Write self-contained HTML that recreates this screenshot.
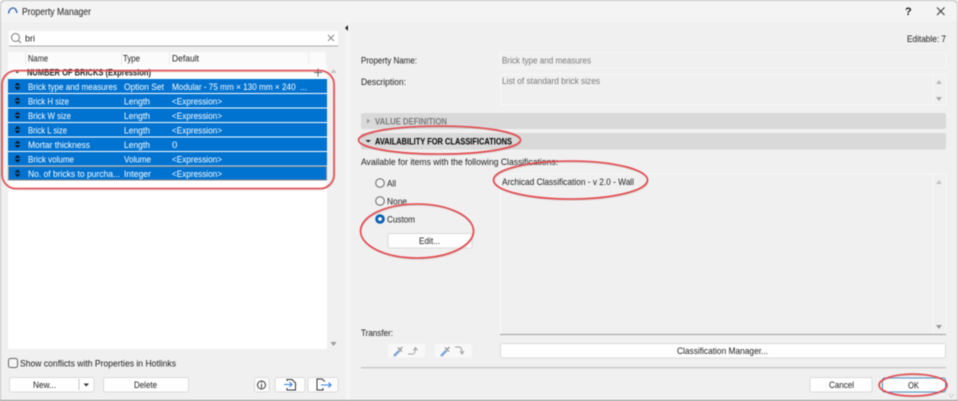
<!DOCTYPE html>
<html><head><meta charset="utf-8"><title>Property Manager</title>
<style>
html,body{margin:0;padding:0;width:958px;height:401px;overflow:hidden;background:#fff}
svg{display:block;filter:blur(.4px)}
text{font-family:"Liberation Sans",sans-serif;font-size:9.6px;fill:#1c1c1c}
.w text{fill:#fff}
.g{fill:#7a7a7a}
.b{font-weight:bold}
.btn{fill:#fefefe;stroke:#dadada;stroke-width:1}
.red{fill:none;stroke:#e5484c;stroke-width:1.6}
.sh{fill:none;stroke:#a88;stroke-opacity:.35;stroke-width:1.4}
</style></head><body>
<svg width="958" height="401" viewBox="0 0 958 401" xmlns="http://www.w3.org/2000/svg">
<rect width="958" height="401" fill="#ececec"/>
<path d="M1 401V6Q1 1 6 1H952Q957 1 957 6V401Z" fill="#f0f0f0"/>
<path d="M1 22V6Q1 1 6 1H952Q957 1 957 6V22Z" fill="#f4f4f4"/>
<path d="M.5 401V6Q.5 .5 6 .5H952Q957.5 .5 957.5 6V401" fill="none" stroke="#c0c0c0"/>
<rect x="0" y="400" width="958" height="1" fill="#8a8a8a"/>
<path d="M8.500 13.500Q9.500 8 13 8Q16 8 17 13" fill="none" stroke="#2a5fb0" stroke-width="1.300"/>
<text x="22" y="15" style="font-size:10.500px" textLength="69" lengthAdjust="spacingAndGlyphs">Property Manager</text>
<text x="905" y="15" style="font-size:11px" font-weight="bold">?</text>
<path d="M937 7.500L944.500 15M944.500 7.500L937 15" stroke="#333" stroke-width="1" fill="none"/>

<!-- search -->
<rect x="9" y="31" width="329" height="15" fill="#fff"/><rect x="9" y="45.500" width="329" height="1" fill="#aaa"/>
<circle cx="15.500" cy="37.500" r="4" fill="none" stroke="#777"/><path d="M18.500 40.500L21 43" stroke="#777"/>
<text x="25" y="41.500" textLength="10" lengthAdjust="spacingAndGlyphs">bri</text>
<path d="M328 35L334 41M334 35L328 41" stroke="#888"/>

<!-- list -->
<rect x="8" y="65" width="319" height="284" fill="#fff"/>
<rect x="8" y="52" width="318" height="13" fill="#fbfbfb"/>
<path d="M25.500 52V65M121.500 52V65M169.500 52V65M308.500 52V65" stroke="#ececec"/>
<text x="28" y="61.500" textLength="20" lengthAdjust="spacingAndGlyphs">Name</text>
<text x="123" y="61.500" textLength="17" lengthAdjust="spacingAndGlyphs">Type</text>
<text x="172" y="61.500" textLength="27" lengthAdjust="spacingAndGlyphs">Default</text>
<path d="M330.500 73L333.500 69L336.500 73Z" fill="#c4c4c4"/><path d="M330.500 342L333.500 346L336.500 342Z" fill="#999"/>
<rect x="16" y="71.500" width="2.500" height="1.500" fill="#444"/>
<text x="27" y="75.500" class="b" textLength="124" lengthAdjust="spacingAndGlyphs">NUMBER OF BRICKS (Expression)</text>
<path d="M314 72.500H322M318 68.500V76.500" stroke="#666"/>

<!-- rows -->
<g fill="#0073d1">
<rect x="8" y="79" width="319" height="14"/>
<rect x="8" y="94" width="319" height="13.500"/>
<rect x="8" y="108.500" width="319" height="13.500"/>
<rect x="8" y="123" width="319" height="13.500"/>
<rect x="8" y="137.500" width="319" height="13.500"/>
<rect x="8" y="152" width="319" height="13.500"/>
<rect x="8" y="166.500" width="319" height="14"/>
</g>
<rect x="8.500" y="166.500" width="318" height="13.500" fill="none" stroke="#888"/>
<g fill="#0d1a28">
<path d="M14.500 85.500L17.500 82.500L20.500 85.500ZM14.500 87L17.500 90L20.500 87Z"/>
<path d="M14.500 100L17.500 97L20.500 100ZM14.500 101.500L17.500 104.500L20.500 101.500Z"/>
<path d="M14.500 114.500L17.500 111.500L20.500 114.500ZM14.500 116L17.500 119L20.500 116Z"/>
<path d="M14.500 129L17.500 126L20.500 129ZM14.500 130.500L17.500 133.500L20.500 130.500Z"/>
<path d="M14.500 143.500L17.500 140.500L20.500 143.500ZM14.500 145L17.500 148L20.500 145Z"/>
<path d="M14.500 158L17.500 155L20.500 158ZM14.500 159.500L17.500 162.500L20.500 159.500Z"/>
<path d="M14.500 172.500L17.500 169.500L20.500 172.500ZM14.500 174L17.500 177L20.500 174Z"/>
</g>
<g class="w">
<text x="28" y="90" textLength="89" lengthAdjust="spacingAndGlyphs">Brick type and measures</text>
<text x="124" y="90" textLength="40" lengthAdjust="spacingAndGlyphs">Option Set</text>
<text x="172" y="90" textLength="135" lengthAdjust="spacingAndGlyphs">Modular - 75 mm × 130 mm × 240 &#160;...</text>
<text x="28" y="104.500" textLength="41" lengthAdjust="spacingAndGlyphs">Brick H size</text>
<text x="124" y="104.500" textLength="26" lengthAdjust="spacingAndGlyphs">Length</text>
<text x="172" y="104.500" textLength="50" lengthAdjust="spacingAndGlyphs">&lt;Expression&gt;</text>
<text x="28" y="119" textLength="43" lengthAdjust="spacingAndGlyphs">Brick W size</text>
<text x="124" y="119" textLength="26" lengthAdjust="spacingAndGlyphs">Length</text>
<text x="172" y="119" textLength="50" lengthAdjust="spacingAndGlyphs">&lt;Expression&gt;</text>
<text x="28" y="133.500" textLength="39" lengthAdjust="spacingAndGlyphs">Brick L size</text>
<text x="124" y="133.500" textLength="26" lengthAdjust="spacingAndGlyphs">Length</text>
<text x="172" y="133.500" textLength="50" lengthAdjust="spacingAndGlyphs">&lt;Expression&gt;</text>
<text x="28" y="148" textLength="62" lengthAdjust="spacingAndGlyphs">Mortar thickness</text>
<text x="124" y="148" textLength="26" lengthAdjust="spacingAndGlyphs">Length</text>
<text x="172" y="148">0</text>
<text x="28" y="162.500" textLength="46" lengthAdjust="spacingAndGlyphs">Brick volume</text>
<text x="124" y="162.500" textLength="27" lengthAdjust="spacingAndGlyphs">Volume</text>
<text x="172" y="162.500" textLength="50" lengthAdjust="spacingAndGlyphs">&lt;Expression&gt;</text>
<text x="28" y="177" textLength="92" lengthAdjust="spacingAndGlyphs">No. of bricks to purcha...</text>
<text x="124" y="177" textLength="27" lengthAdjust="spacingAndGlyphs">Integer</text>
<text x="172" y="177" textLength="50" lengthAdjust="spacingAndGlyphs">&lt;Expression&gt;</text>
</g>
<rect x="2.500" y="71.500" width="332" height="118" rx="14" class="sh"/>
<rect x="2" y="70.500" width="332" height="118" rx="14" class="red"/>

<!-- bottom left -->
<rect x="8.500" y="358.500" width="9" height="9" rx="2" fill="#f6f6f6" stroke="#666"/>
<text x="20" y="366.500" textLength="156" lengthAdjust="spacingAndGlyphs">Show conflicts with Properties in Hotlinks</text>
<rect x="9.500" y="377.500" width="84.500" height="14.500" rx="2" class="btn"/>
<path d="M79 379V390" stroke="#c4c4c4"/>
<text x="33" y="388" textLength="23" lengthAdjust="spacingAndGlyphs">New...</text>
<path d="M83.500 383.500H89L86.250 386.500Z" fill="#333"/>
<rect x="103.500" y="377.500" width="85" height="14.500" rx="2" class="btn"/>
<text x="134" y="388" textLength="23" lengthAdjust="spacingAndGlyphs">Delete</text>
<rect x="254.500" y="377.500" width="14.500" height="14.500" rx="2" class="btn"/>
<circle cx="261.500" cy="385" r="4" fill="none" stroke="#333"/><path d="M261.500 384V388M261.500 382V383" stroke="#333"/>
<rect x="275" y="377.500" width="30" height="14.500" rx="2" class="btn"/>
<path d="M287 381V379.500H292L295.500 383V390H287V388" fill="none" stroke="#333"/>
<path d="M284 384.500H292M289.500 382L292 384.500L289.500 387" fill="none" stroke="#2f7fe0" stroke-width="1.100"/>
<rect x="308" y="377.500" width="30" height="14.500" rx="2" class="btn"/>
<path d="M325 381.500L322 379H317V390H323V388" fill="none" stroke="#333"/>
<path d="M321 385H331M328.500 382.500L331 385L328.500 387.500" fill="none" stroke="#2f7fe0" stroke-width="1.100"/>

<!-- splitter -->
<rect x="346" y="23" width="4" height="377" fill="#f5f5f5"/>
<path d="M345 28L348 25V31Z" fill="#222"/>

<!-- right top -->
<text x="907" y="42" textLength="39" lengthAdjust="spacingAndGlyphs">Editable: 7</text>
<text x="361" y="63.500" textLength="56" lengthAdjust="spacingAndGlyphs">Property Name:</text>
<rect x="500.500" y="52.500" width="445.500" height="15.500" fill="#f0f0f0" stroke="#f7f7f7"/>
<text x="502" y="63.500" class="g" textLength="89" lengthAdjust="spacingAndGlyphs">Brick type and measures</text>
<text x="361" y="85" textLength="45" lengthAdjust="spacingAndGlyphs">Description:</text>
<rect x="500.500" y="74.500" width="445.500" height="30.500" fill="#f0f0f0" stroke="#f7f7f7"/>
<path d="M933 75V105" stroke="#f7f7f7"/>
<text x="502" y="84" class="g" textLength="98" lengthAdjust="spacingAndGlyphs">List of standard brick sizes</text>
<path d="M936 84L939 80L942 84Z" fill="#bbb"/><path d="M936 97L939 101L942 97Z" fill="#aaa"/>

<!-- bands -->
<rect x="361" y="113" width="585" height="16" rx="2" fill="#d9d9d9"/>
<path d="M367 118.500L370 121L367 123.500Z" fill="#999"/>
<text x="375" y="124.500" class="b g" textLength="72" lengthAdjust="spacingAndGlyphs">VALUE DEFINITION</text>
<rect x="361" y="133" width="585" height="16.500" rx="2" fill="#d9d9d9"/>
<path d="M365.500 140H371L368.250 142.500Z" fill="#222"/>
<text x="375" y="144.500" class="b" style="fill:#000" textLength="137" lengthAdjust="spacingAndGlyphs">AVAILABILITY FOR CLASSIFICATIONS</text>
<text x="361" y="165" textLength="197" lengthAdjust="spacingAndGlyphs">Available for items with the following Classifications:</text>

<!-- radios -->
<circle cx="380" cy="183" r="4.300" fill="#f4f4f4" stroke="#666"/>
<text x="387" y="186.500" textLength="9" lengthAdjust="spacingAndGlyphs">All</text>
<circle cx="380" cy="201" r="4.300" fill="#f4f4f4" stroke="#666"/>
<text x="387" y="204.500" textLength="20" lengthAdjust="spacingAndGlyphs">None</text>
<circle cx="380" cy="219" r="4.800" fill="#0a5fb4"/><circle cx="380" cy="219" r="1.900" fill="#fff"/>
<text x="387" y="222.500" textLength="28" lengthAdjust="spacingAndGlyphs">Custom</text>
<rect x="388" y="233.500" width="84" height="14.500" rx="2" class="btn"/>
<text x="419" y="244" textLength="21" lengthAdjust="spacingAndGlyphs">Edit...</text>

<!-- classification box -->
<path d="M500.500 174V334" stroke="#f8f8f8"/><path d="M933 174V334" stroke="#f8f8f8"/>
<path d="M500 174H946M946 174V334" stroke="#f7f7f7" fill="none"/>
<rect x="500" y="334" width="446" height="1" fill="#a0a0a0"/>
<text x="502" y="185" textLength="132" lengthAdjust="spacingAndGlyphs">Archicad Classification - v 2.0 - Wall</text>
<path d="M936 184L939 180L942 184Z" fill="#c4c4c4"/><path d="M936 325L939 329L942 325Z" fill="#999"/>

<!-- transfer -->
<text x="361" y="336" textLength="32" lengthAdjust="spacingAndGlyphs">Transfer:</text>
<rect x="388" y="344" width="37" height="13.500" rx="2" fill="#f8f8f8"/>
<rect x="435" y="344" width="37" height="13.500" rx="2" fill="#f8f8f8"/>
<path d="M394 356L399.500 350.500" stroke="#7da6d8" stroke-width="2.500" fill="none"/>
<path d="M398 347.500L402 351.500M400 349.500L402.500 347" stroke="#8a8a8a" stroke-width="1.200" fill="none"/>
<path d="M408 354H413Q415 354 415.500 348.500M413.500 350.500L415.500 347.500L417.500 350.500" stroke="#a0a0a0" fill="none"/>
<path d="M441 356L446.500 350.500" stroke="#7da6d8" stroke-width="2.500" fill="none"/>
<path d="M445 347.500L449 351.500M447 349.500L449.500 347" stroke="#8a8a8a" stroke-width="1.200" fill="none"/>
<path d="M455 347H459Q462 347 462 353M460 351L462 354L464 351" stroke="#a0a0a0" fill="none"/>
<rect x="500.500" y="343.500" width="445" height="14.500" rx="2" class="btn"/>
<text x="677" y="354" textLength="91" lengthAdjust="spacingAndGlyphs">Classification Manager...</text>
<rect x="361" y="367" width="585" height="1.300" fill="#c4c4c4"/>
<rect x="810" y="377.500" width="62" height="14.500" rx="2" class="btn"/>
<text x="829" y="388" textLength="25" lengthAdjust="spacingAndGlyphs">Cancel</text>
<rect x="882.500" y="378" width="63" height="14" rx="2" fill="#fdfdfd" stroke="#4a90c8"/>
<text x="908" y="388.500" textLength="11" lengthAdjust="spacingAndGlyphs">OK</text>
<path d="M950 397H952M953 394V396M950 394V396" stroke="#c4c4c4"/>

<!-- annotations -->
<ellipse cx="440" cy="141" rx="81" ry="14" class="sh"/>
<ellipse cx="439.500" cy="140" rx="81" ry="14" class="red"/>
<ellipse cx="571" cy="181" rx="77" ry="19" class="sh"/>
<ellipse cx="570.500" cy="180" rx="77" ry="19" class="red"/>
<ellipse cx="417.500" cy="232" rx="56.500" ry="27" class="sh"/>
<ellipse cx="417" cy="231" rx="56.500" ry="27" class="red"/>
<ellipse cx="913.500" cy="386" rx="34" ry="11" class="sh"/>
<ellipse cx="913" cy="385" rx="34" ry="11" class="red"/>
</svg>
</body></html>
